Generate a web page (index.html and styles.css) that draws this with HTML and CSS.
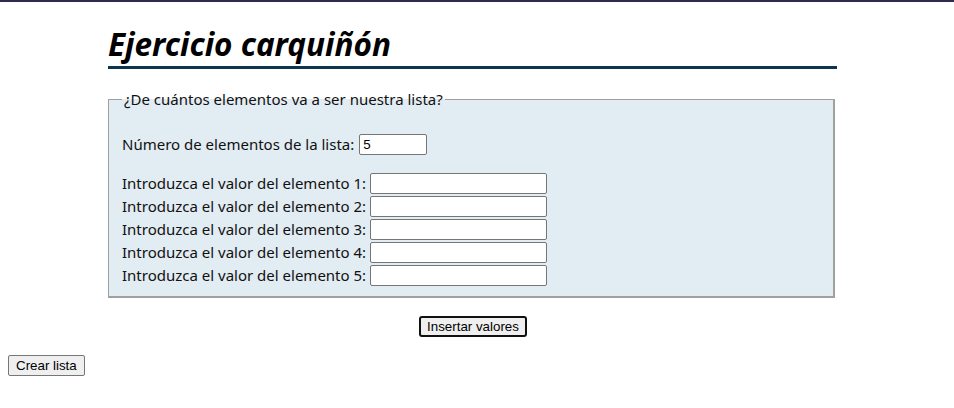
FILE: index.html
```html
<!DOCTYPE html>
<html lang="es">
<head>
<meta charset="utf-8">
<title>Ejercicio carquiñón</title>
<link rel="stylesheet" href="styles.css">
</head>
<body>
<div class="wrap">
  <h1 class="title">Ejercicio carquiñón</h1>
  <form class="form">
    <fieldset class="box">
      <legend class="legend">¿De cuántos elementos va a ser nuestra lista?</legend>
      <div class="count-row">
        <label class="lbl" for="n">Número de elementos de la lista:</label>
        <input class="num" id="n" type="text" value="5">
      </div>
      <div class="rows">
        <div class="row"><label class="lbl" for="e1">Introduzca el valor del elemento 1:</label><input class="val" id="e1" type="text"></div>
        <div class="row"><label class="lbl" for="e2">Introduzca el valor del elemento 2:</label><input class="val" id="e2" type="text"></div>
        <div class="row"><label class="lbl" for="e3">Introduzca el valor del elemento 3:</label><input class="val" id="e3" type="text"></div>
        <div class="row"><label class="lbl" for="e4">Introduzca el valor del elemento 4:</label><input class="val" id="e4" type="text"></div>
        <div class="row"><label class="lbl" for="e5">Introduzca el valor del elemento 5:</label><input class="val" id="e5" type="text"></div>
      </div>
    </fieldset>
    <div class="actions">
      <button class="btn btn-focus" type="button">Insertar valores</button>
    </div>
  </form>
</div>
<button class="btn btn-plain" type="button">Crear lista</button>
</body>
</html>
```
FILE: styles.css
```css
html {
  border-top: 2px solid #2f2b4f;
}
body {
  margin: 0 8px 8px;
  font-family: "Noto Sans", sans-serif;
  color: #111;
  background: #fff;
}
.wrap {
  margin-left: 100px;
  width: 729px;
}
.title {
  margin: 0;
  padding-top: 22px;
  font-size: 31.5px;
  line-height: 40px;
  font-style: italic;
  font-weight: bold;
  color: #000;
  border-bottom: 3px solid #0b3650;
  padding-bottom: 2px;
}
.form {
  margin: 0;
  padding-top: 20px;
}
.box {
  margin: 0;
  width: 727px;
  box-sizing: border-box;
  background: #e2ecf3;
  border-color: #a0a0a0;
  border-style: solid;
  border-width: 1px 2px 2px 1px;
  padding: 25px 13px 10px;
  font-size: 15px;
}
.legend {
  padding: 0 2px;
  margin-left: 0;
  font-size: 15px;
  color: #111;
}
.count-row {
  display: flex;
  align-items: center;
  gap: 5px;
  height: 21px;
}
.rows {
  margin-top: 18px;
  display: flex;
  flex-direction: column;
  gap: 2px;
}
.row {
  display: flex;
  align-items: center;
  gap: 4px;
  height: 21px;
}
.lbl {
  line-height: 21px;
}
.num, .val {
  box-sizing: border-box;
  height: 21px;
  margin: 0;
  padding: 1px 3px;
  border: 1px solid #767676;
  border-radius: 2px;
  background: #fff;
  font-family: "Liberation Sans", Arial, sans-serif;
  font-size: 13.33px;
  color: #000;
}
.num { width: 68px; }
.val { width: 177px; }
.actions {
  display: flex;
  justify-content: center;
  padding-left: 1px;
  padding-top: 18px;
  padding-bottom: 16px;
}
.btn {
  box-sizing: border-box;
  height: 21px;
  margin: 0;
  padding: 1px 6px;
  border: 1px solid #767676;
  border-radius: 2px;
  background: #efefef;
  font-family: "Liberation Sans", Arial, sans-serif;
  font-size: 13.33px;
  color: #000;
}
.btn-plain {
  padding: 1px 7px;
}
.btn-focus {
  border: 2px solid #101010;
  border-radius: 3px;
  padding: 0 6.5px;
}
```
